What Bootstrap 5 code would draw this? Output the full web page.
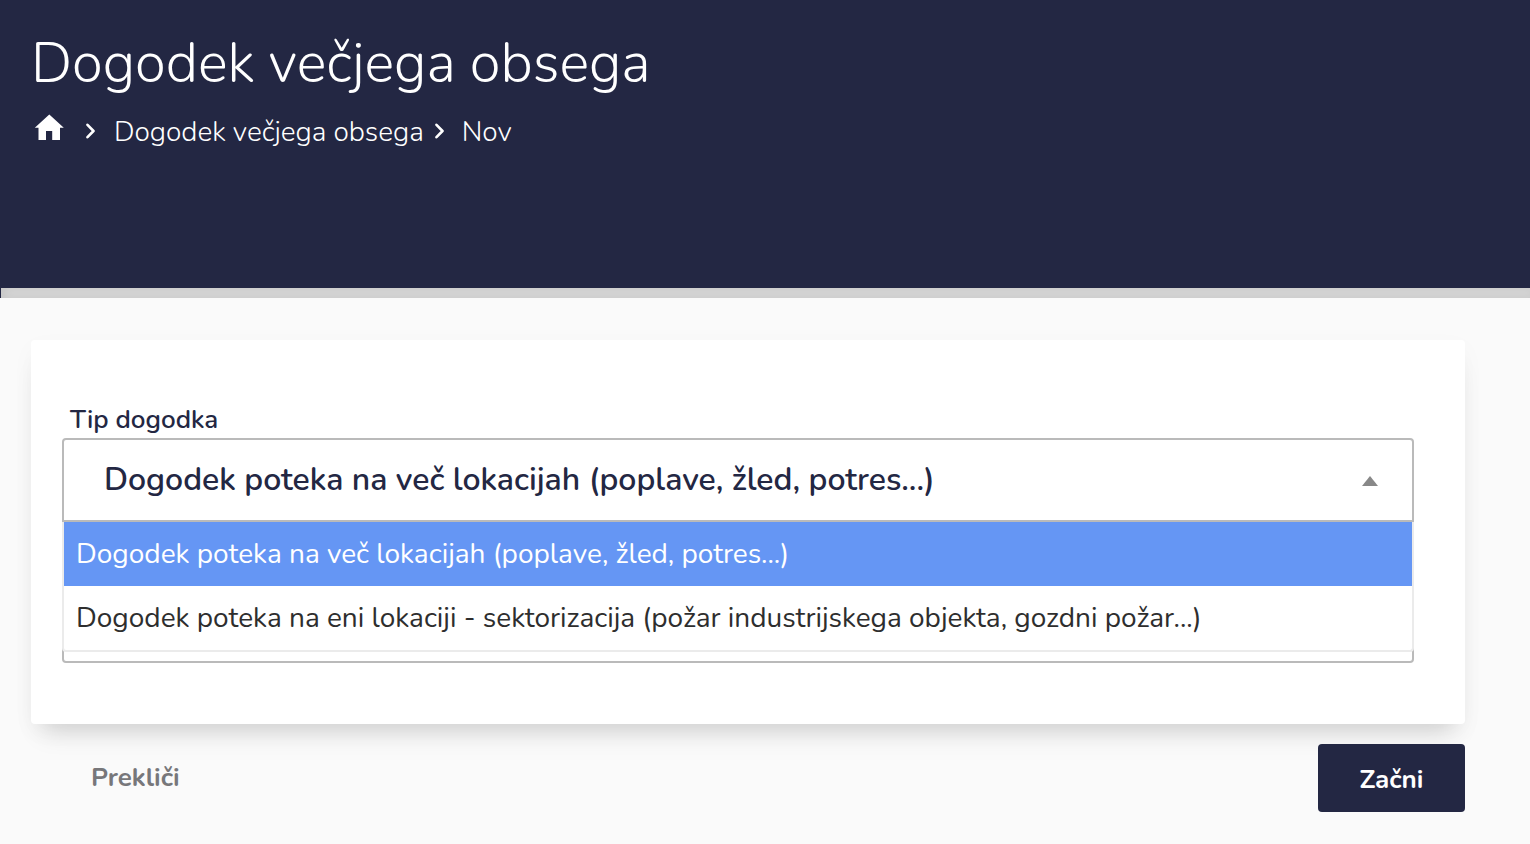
<!DOCTYPE html>
<html lang="sl">
<head>
<meta charset="utf-8">
<meta name="viewport" content="width=device-width, initial-scale=1">
<title>Dogodek večjega obsega</title>
<link href="https://cdn.jsdelivr.net/npm/bootstrap@5.3.0/dist/css/bootstrap.min.css" rel="stylesheet">
<style>
:root { --navy: #232743; --line: #bababa; }
body { background: #fafafa; color: var(--navy); font-family: Nunito, Lato, sans-serif; }
.page-head { background: var(--navy); height: 288px; padding: 34px 31px 0; }
.page-title { font-size: 56px; line-height: 60px; font-weight: 300; margin: 0; }
.crumbs { font-size: 28px; line-height: 36px; font-weight: 300; margin-top: 18px; padding-left: 2px; }
.crumbs .home { margin-bottom: 6px; }
.crumbs .chev { margin: 0 19px 0 21px; }
.crumbs .chev-near { margin: 0 18px 0 11px; }
.crumbs .crumb-text { padding-top: 1px; }
.head-strip { height: 10px; border-left: 1px solid var(--navy); background: #d6d6d6; box-shadow: inset 4px 0 8px rgba(0,0,0,.07); }
.page-body { padding: 42px 65px 32px 31px; }
.panel { border-radius: 4px; padding: 62px 51px 61px 31px; box-shadow: 0 18px 24px -12px rgba(0,0,0,.17), 0 8px 24px rgba(0,0,0,.03); }
.field-label { font-size: 26px; line-height: 36px; font-weight: 600; padding-left: 8px; }
.box { width: 100%; border: 2px solid var(--line); border-radius: 4px; background: #fff; color: var(--navy); font-weight: 600; padding: 0 40px; display: block; }
select.box { appearance: none; height: 84px; font-size: 32px; border-radius: 4px 4px 0 0; }
input.box { height: 83px; font-size: 32px; margin-top: 58px; }
.arrow { right: 36px; top: 38px; pointer-events: none; }
.options { top: 84px; left: 0; right: 0; z-index: 5; background: #fff; border: 2px solid #ebebeb; border-top: 0; border-radius: 0 0 4px 4px; font-size: 28px; line-height: 64px; color: #2e2e2e; }
.options li { padding: 0 12px; }
.options .chosen { background: #6596f4; color: #fff; }
.btn-plain { font-size: 26px; line-height: 36px; font-weight: 700; color: #77777a; padding: 16px 60px; border: 0; }
.btn-go { font-size: 26px; line-height: 36px; font-weight: 700; color: #fff; background: var(--navy); border: 0; border-radius: 4px; padding: 18px 0 14px; width: 147px; }
</style>
</head>
<body>
<header class="page-head text-white">
  <h1 class="page-title">Dogodek večjega obsega</h1>
  <nav class="crumbs d-flex align-items-center" aria-label="Drobtinice">
    <a href="#" class="home d-flex text-white" aria-label="Domov"><svg width="32" height="32" viewBox="0 0 32 32" fill="currentColor"><path d="M16.300 2.500L30.800 15.700H27V28H19.200V19H13V28H5.500V15.700H1.800Z"/></svg></a>
    <svg class="chev" width="9" height="16" viewBox="0 0 9 16" fill="none" stroke="currentColor" stroke-width="2.600" stroke-linecap="round" stroke-linejoin="round"><path d="M1.500 1.800L7.500 8L1.500 14.200"/></svg>
    <a href="#" class="crumb-text text-white text-decoration-none">Dogodek večjega obsega</a>
    <svg class="chev chev-near" width="9" height="16" viewBox="0 0 9 16" fill="none" stroke="currentColor" stroke-width="2.600" stroke-linecap="round" stroke-linejoin="round"><path d="M1.500 1.800L7.500 8L1.500 14.200"/></svg>
    <span class="crumb-text">Nov</span>
  </nav>
</header>
<div class="head-strip"></div>
<main class="page-body">
  <form>
    <section class="panel bg-white">
      <label for="tip" class="field-label d-block">Tip dogodka</label>
      <div class="position-relative">
        <select id="tip" class="box">
          <option selected>Dogodek poteka na več lokacijah (poplave, žled, potres...)</option>
          <option>Dogodek poteka na eni lokaciji - sektorizacija (požar industrijskega objekta, gozdni požar...)</option>
        </select>
        <svg class="arrow position-absolute" width="16" height="10" viewBox="0 0 16 10" fill="#888"><path d="M8 0L16 10H0Z"/></svg>
        <ul class="options list-unstyled m-0 position-absolute" role="listbox">
          <li class="chosen" role="option" aria-selected="true">Dogodek poteka na več lokacijah (poplave, žled, potres...)</li>
          <li role="option" aria-selected="false">Dogodek poteka na eni lokaciji - sektorizacija (požar industrijskega objekta, gozdni požar...)</li>
        </ul>
        <input class="box" type="text" aria-label="Naziv">
      </div>
    </section>
    <div class="d-flex justify-content-between align-items-start pt-3 mt-1">
      <button type="button" class="btn btn-plain">Prekliči</button>
      <button type="submit" class="btn btn-go">Začni</button>
    </div>
  </form>
</main>
<script src="https://cdn.jsdelivr.net/npm/bootstrap@5.3.0/dist/js/bootstrap.bundle.min.js"></script>
</body>
</html>
